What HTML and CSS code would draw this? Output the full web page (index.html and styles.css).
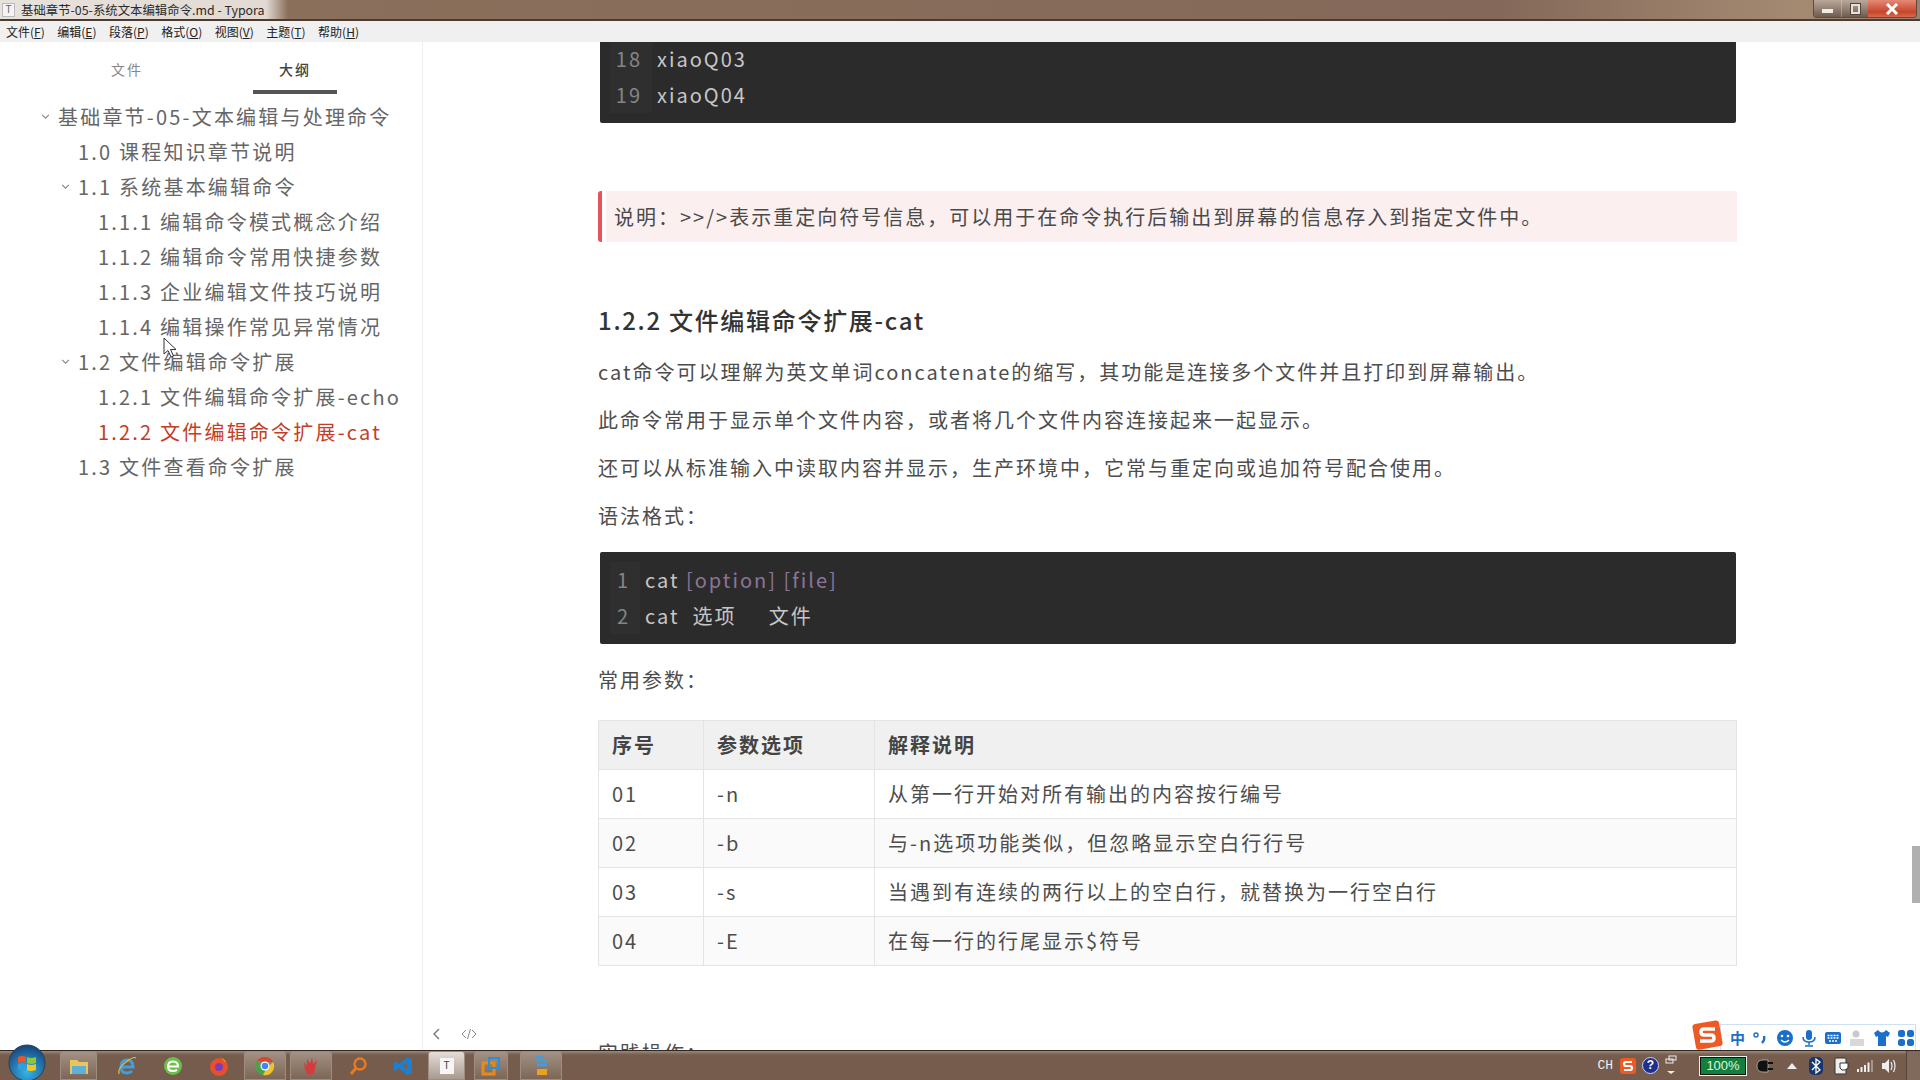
FILE: index.html
```html
<!DOCTYPE html>
<html lang="zh-CN">
<head>
<meta charset="utf-8">
<title>Typora</title>
<link rel="stylesheet" href="styles.css">
</head>
<body>
<div class="app">
  <header class="titlebar">
    <div class="title-left">
      <span class="app-icon">T</span>
      <span class="title-text">基础章节-05-系统文本编辑命令.md - Typora</span>
    </div>
    <div class="winbtns">
      <span class="wb wb-min"><i class="min-glyph"></i></span>
      <span class="wb wb-max"><i class="max-glyph"></i></span>
      <span class="wb wb-close">
        <svg width="14" height="12" viewBox="0 0 14 12"><path d="M2 1l10 10M12 1L2 11" stroke="#fff" stroke-width="3"/></svg>
      </span>
    </div>
  </header>
  <nav class="menubar">
    <span class="mi">文件(<u>F</u>)</span>
    <span class="mi">编辑(<u>E</u>)</span>
    <span class="mi">段落(<u>P</u>)</span>
    <span class="mi">格式(<u>O</u>)</span>
    <span class="mi">视图(<u>V</u>)</span>
    <span class="mi">主题(<u>T</u>)</span>
    <span class="mi">帮助(<u>H</u>)</span>
  </nav>
  <main class="main">
    <aside class="sidebar">
      <div class="tabs">
        <span class="tab">文件</span>
        <span class="tab tab-on">大纲</span>
      </div>
      <ul class="outline">
        <li class="l1"><svg class="chev" viewBox="0 0 8 6"><path d="M1 1.5l3 3 3-3" fill="none" stroke="#888" stroke-width="1"/></svg>基础章节-05-文本编辑与处理命令</li>
        <li class="l2"><span class="nochev"></span>1.0 课程知识章节说明</li>
        <li class="l2"><svg class="chev" viewBox="0 0 8 6"><path d="M1 1.5l3 3 3-3" fill="none" stroke="#888" stroke-width="1"/></svg>1.1 系统基本编辑命令</li>
        <li class="l3"><span class="nochev"></span>1.1.1 编辑命令模式概念介绍</li>
        <li class="l3"><span class="nochev"></span>1.1.2 编辑命令常用快捷参数</li>
        <li class="l3"><span class="nochev"></span>1.1.3 企业编辑文件技巧说明</li>
        <li class="l3"><span class="nochev"></span>1.1.4 编辑操作常见异常情况</li>
        <li class="l2"><svg class="chev" viewBox="0 0 8 6"><path d="M1 1.5l3 3 3-3" fill="none" stroke="#888" stroke-width="1"/></svg>1.2 文件编辑命令扩展</li>
        <li class="l3"><span class="nochev"></span>1.2.1 文件编辑命令扩展-echo</li>
        <li class="l3 active"><span class="nochev"></span>1.2.2 文件编辑命令扩展-cat</li>
        <li class="l2"><span class="nochev"></span>1.3 文件查看命令扩展</li>
      </ul>
    </aside>
    <section class="content">
      <div class="doc">
        <div class="code code-top">
          <div class="line"><span class="ln ln2">18</span><span>xiaoQ03</span></div>
          <div class="line"><span class="ln ln2">19</span><span>xiaoQ04</span></div>
        </div>
        <blockquote class="callout"><p class="callout-text">说明：&gt;&gt;/&gt;表示重定向符号信息，可以用于在命令执行后输出到屏幕的信息存入到指定文件中。</p></blockquote>
        <h3 class="h3">1.2.2 文件编辑命令扩展-cat</h3>
        <p class="para">cat命令可以理解为英文单词concatenate的缩写，其功能是连接多个文件并且打印到屏幕输出。</p>
        <p class="para">此命令常用于显示单个文件内容，或者将几个文件内容连接起来一起显示。</p>
        <p class="para">还可以从标准输入中读取内容并显示，生产环境中，它常与重定向或追加符号配合使用。</p>
        <p class="para">语法格式：</p>
        <div class="code code-mid">
          <div class="line"><span class="ln ln1">1</span><span>cat <span class="purple">[option] [file]</span></span></div>
          <div class="line"><span class="ln ln1">2</span><span class="pre">cat  选项     文件</span></div>
        </div>
        <p class="para para-mid">常用参数：</p>
        <table class="tbl">
          <thead><tr><th class="c1">序号</th><th class="c2">参数选项</th><th>解释说明</th></tr></thead>
          <tbody>
            <tr><td>01</td><td>-n</td><td>从第一行开始对所有输出的内容按行编号</td></tr>
            <tr><td>02</td><td>-b</td><td>与-n选项功能类似，但忽略显示空白行行号</td></tr>
            <tr><td>03</td><td>-s</td><td>当遇到有连续的两行以上的空白行，就替换为一行空白行</td></tr>
            <tr><td>04</td><td>-E</td><td>在每一行的行尾显示$符号</td></tr>
          </tbody>
        </table>
        <p class="para para-last">实践操作：</p>
      </div>
    </section>
    <div class="foot-tools">
      <svg width="10" height="14" viewBox="0 0 10 14"><path d="M8 2L3 7l5 5" fill="none" stroke="#777" stroke-width="1.4"/></svg>
      <svg width="16" height="12" viewBox="0 0 16 12"><path d="M5 2L1 6l4 4M11 2l4 4-4 4M9.5 1L6.5 11" fill="none" stroke="#888" stroke-width="1"/></svg>
    </div>
    <div class="scroll-thumb"></div>
    <svg class="cursor" width="14" height="21" viewBox="0 0 14 21"><path d="M1 1v16l4-3.5 3 6.5 2.5-1-3-6.5h5.5z" fill="#fff" stroke="#333" stroke-width="1"/></svg>
  </main>
  <div class="ime">
    <svg class="ime-logo" width="32" height="30" viewBox="0 0 32 30"><rect x="2" y="2" width="27" height="26" rx="3" fill="#ee5a24" transform="rotate(-10 16 15)"/><path d="M23 9H12q-3 0-3 3t3 3h7q3 0 3 3t-3 3H8" fill="none" stroke="#fff" stroke-width="3.5"/></svg>
    <div class="ime-bar">
      <span class="ime-zh">中</span>
      <svg width="18" height="18" viewBox="0 0 18 18"><circle cx="5" cy="6" r="2" fill="none" stroke="#1a6fc9" stroke-width="1.4"/><path d="M13 7q1 4-2 7" fill="none" stroke="#1a6fc9" stroke-width="2.4"/></svg>
      <svg width="18" height="18" viewBox="0 0 18 18"><circle cx="9" cy="9" r="8" fill="#1a6fc9"/><circle cx="6" cy="7" r="1.3" fill="#fff"/><circle cx="12" cy="7" r="1.3" fill="#fff"/><path d="M5 11q4 4 8 0" fill="none" stroke="#fff" stroke-width="1.4"/></svg>
      <svg width="18" height="18" viewBox="0 0 18 18"><rect x="6" y="1" width="6" height="10" rx="3" fill="#1a6fc9"/><path d="M3 8q0 5 6 5t6-5M9 13v3M5 17h8" fill="none" stroke="#1a6fc9" stroke-width="1.5"/></svg>
      <svg width="18" height="18" viewBox="0 0 18 18"><rect x="1" y="3" width="16" height="12" rx="2" fill="#1a6fc9"/><path d="M3.5 6.5h11M3.5 9h11M5 12h8" stroke="#fff" stroke-width="1.3" stroke-dasharray="2 1"/></svg>
      <svg width="18" height="18" viewBox="0 0 18 18"><circle cx="8" cy="5" r="3.5" fill="#c9c9c9"/><rect x="2" y="10" width="14" height="7" fill="#d8d8d8"/></svg>
      <svg width="18" height="18" viewBox="0 0 18 18"><path d="M5 1L1 4l2 4 2-1v10h8V7l2 1 2-4-4-3q-2 2.500-4 2.500T5 1z" fill="#1a6fc9"/></svg>
      <svg width="18" height="18" viewBox="0 0 18 18"><rect x="1" y="1" width="7" height="7" rx="2.500" fill="#1a6fc9"/><rect x="10" y="1" width="7" height="7" rx="2.500" fill="#1a6fc9"/><rect x="1" y="10" width="7" height="7" rx="2.500" fill="#1a6fc9"/><rect x="10" y="10" width="7" height="7" rx="2.500" fill="#1a6fc9"/></svg>
    </div>
  </div>
  <footer class="taskbar">
    <div class="tb-left">
      <span class="slot s-orb">
        <svg width="38" height="38" viewBox="0 0 38 38"><defs><radialGradient id="orb" cx="50%" cy="75%" r="70%"><stop offset="0" stop-color="#35b6ea"/><stop offset="1" stop-color="#174a80"/></radialGradient></defs><circle cx="19" cy="19" r="18" fill="url(#orb)" stroke="#2c3f52"/><path d="M10 13q4-2 8 0v6q-4-2-8 0z" fill="#e8562a"/><path d="M19 13q4 2 9 0v6q-5 2-9 0z" fill="#8cc63f"/><path d="M10 20q4-2 8 0v6q-4-2-8 0z" fill="#2f9fe0"/><path d="M19 20q4 2 9 0v6q-5 2-9 0z" fill="#f5c518"/></svg>
      </span>
      <span class="slot btn s-exp">
        <svg width="20" height="18" viewBox="0 0 20 18"><path d="M1 3h7l2 2h9v12H1z" fill="#e9c65c"/><rect x="3" y="9" width="14" height="8" fill="#5fb0d8"/></svg>
      </span>
      <span class="slot s-46">
        <svg width="22" height="22" viewBox="0 0 22 22"><path d="M5 12h12q0-7-6-7t-6 7q0 6 6 6 3 0 5-2" fill="none" stroke="#3f9ee0" stroke-width="3"/><path d="M3 19Q1 14 10 7q8-6 10-4" fill="none" stroke="#e3bb3c" stroke-width="1.3"/></svg>
      </span>
      <span class="slot s-46">
        <svg width="20" height="20" viewBox="0 0 20 20"><circle cx="10" cy="10" r="9" fill="#6cc04a"/><path d="M5 10.500h10q0-5-5-5t-5 5q0 4.500 5 4.500 2 0 4-1" fill="none" stroke="#fff" stroke-width="2"/></svg>
      </span>
      <span class="slot s-46">
        <svg width="22" height="22" viewBox="0 0 22 22"><circle cx="11" cy="12" r="9" fill="#e8502c"/><path d="M11 1q6 3 9 9-1-3-4-4-1-3-5-5z" fill="#f8a825"/><circle cx="11" cy="12" r="4" fill="#7b3fb5"/></svg>
      </span>
      <span class="slot btn s-chrome">
        <svg width="20" height="20" viewBox="0 0 20 20"><path d="M10 1a9 9 0 0 1 8 5h-8z" fill="#d9452f"/><path d="M2 5a9 9 0 0 1 8-4v5z" fill="#d9452f"/><path d="M2 5a9 9 0 0 0 6 14l3-6z" fill="#4aa14a"/><path d="M18 6a9 9 0 0 1-10 13l3-6z" fill="#f2c22e"/><circle cx="10" cy="10" r="4.500" fill="#fff"/><circle cx="10" cy="10" r="3.300" fill="#4285f4"/></svg>
      </span>
      <span class="slot btn s-red">
        <svg width="18" height="20" viewBox="0 0 18 20"><path d="M2 6l3 4V2l3 6 2-7 1 7 4-4-2 8q-1 7-5 7-5 0-6-13z" fill="#d63b3b"/></svg>
      </span>
      <span class="slot s-46 s-search">
        <svg width="20" height="20" viewBox="0 0 20 20"><circle cx="12" cy="8" r="5.500" fill="none" stroke="#e8791e" stroke-width="2.500"/><path d="M8 12l-5 6" stroke="#e8791e" stroke-width="3"/></svg>
      </span>
      <span class="slot s-46 s-code">
        <svg width="20" height="20" viewBox="0 0 20 20"><path d="M14 1l5 2v14l-5 2-8-7-4 3-1-1V6l1-1 4 3z" fill="#1d7fd0"/><path d="M14 6l-4 4 4 4z" fill="#7a604f"/></svg>
      </span>
      <span class="slot btn btn-on s-typ"><span class="typ-icon">T</span></span>
      <span class="slot btn s-box">
        <svg width="20" height="20" viewBox="0 0 20 20"><rect x="2" y="7" width="11" height="11" fill="none" stroke="#e58a1f" stroke-width="3"/><rect x="8" y="2" width="10" height="10" fill="none" stroke="#2e8fd0" stroke-width="2"/></svg>
      </span>
      <span class="slot btn s-sub">
        <svg width="20" height="22" viewBox="0 0 20 22"><path d="M4 2h9M4 6h12M6 10h10" stroke="#3f9ee0" stroke-width="2.500"/><path d="M6 14h10v6H6z" fill="#e8a21f"/></svg>
      </span>
    </div>
    <div class="tb-right">
      <span class="tray-ch">CH</span>
      <svg width="18" height="18" viewBox="0 0 18 18"><rect x="1" y="1" width="16" height="16" rx="3" fill="#ee5a24"/><path d="M13 5H7q-2 0-2 2t2 2h4q2 0 2 2t-2 2H5" fill="none" stroke="#fff" stroke-width="2.200"/></svg>
      <span class="tray-help">?</span>
      <svg class="t-win" width="14" height="22" viewBox="0 0 14 22"><rect x="2" y="4" width="7" height="4" fill="none" stroke="#eee"/><rect x="5" y="1" width="7" height="4" fill="none" stroke="#eee"/><path d="M3 16h8l-4 3z" fill="#eee"/></svg>
      <span class="battery"><span class="battery-fill">100%</span></span>
      <svg class="t-plug" width="18" height="14" viewBox="0 0 18 14"><path d="M7 1h5v12H7Q1 13 1 7t6-6z" fill="#111" stroke="#ddd" stroke-width=".6"/><path d="M12 4h5M12 10h5" stroke="#111" stroke-width="2"/></svg>
      <svg class="t-arrow" width="10" height="6" viewBox="0 0 10 6"><path d="M5 0l5 6H0z" fill="#eee"/></svg>
      <svg class="t-bt" width="14" height="18" viewBox="0 0 14 18"><rect width="14" height="18" rx="5" fill="#17356e"/><path d="M3 5l8 8-4 3V2l4 3-8 8" fill="none" stroke="#fff" stroke-width="1.300"/></svg>
      <svg class="t-usb" width="16" height="20" viewBox="0 0 16 20"><rect x="1" y="2" width="11" height="16" rx="1" fill="#eee" stroke="#333"/><path d="M6 7h8v5l-3 2H8l-2-2z" fill="#fff" stroke="#333"/></svg>
      <svg class="t-sig" width="16" height="12" viewBox="0 0 16 12"><rect x="0" y="9" width="2" height="3" fill="#eee"/><rect x="3.500" y="7" width="2" height="5" fill="#eee"/><rect x="7" y="5" width="2" height="7" fill="#eee"/><rect x="10.500" y="2.500" width="2" height="9.500" fill="#eee"/><rect x="14" y="0" width="2" height="12" fill="#a89688"/></svg>
      <svg class="t-vol" width="16" height="16" viewBox="0 0 16 16"><path d="M1 5h3l4-4v14l-4-4H1z" fill="#eee"/><path d="M10 4q2 4 0 8M12.500 2q3 6 0 12" fill="none" stroke="#eee" stroke-width="1.200"/></svg>
      <span class="show-desk"></span>
    </div>
  </footer>
</div>
</body>
</html>
```
FILE: styles.css
```css
* { box-sizing: border-box; }
html, body { margin: 0; padding: 0; height: 100%; overflow: hidden; }
body { font-family: "Noto Sans CJK SC", "Noto Sans", sans-serif; background: #fff; color: #4d4d4d; }
.app { position: relative; width: 1920px; height: 1080px; display: flex; flex-direction: column; overflow: hidden; }

/* title bar */
.titlebar { height: 21px; flex: none; display: flex; justify-content: space-between;
  background: linear-gradient(90deg, #e8e2dc 0, #e2dad3 266px, #8a6f5b 288px, #84695a 1500px, #a58a72 1800px, #9b8270 100%);
  border-bottom: 2px solid #4b3b32; }
.title-left { display: flex; align-items: center; height: 20px; }
.app-icon { width: 13px; height: 14px; margin-left: 2px; background: #f4f4f4; border: 1px solid #bbb; color: #666; font: 10px/12px "Liberation Sans", sans-serif; text-align: center; }
.title-text { margin-left: 6px; font-size: 12.4px; line-height: 20px; color: #2a2a2a; }
.winbtns { display: flex; height: 18px; margin-right: 3px; border: 1px solid #5a4a40; border-top: 0; border-radius: 0 0 4px 4px; overflow: hidden; }
.wb { display: flex; align-items: center; justify-content: center; height: 100%; }
.wb-min { width: 28px; background: linear-gradient(#b9a99b, #6d5b4f); border-right: 1px solid #eee5; }
.wb-max { width: 26px; background: linear-gradient(#b9a99b, #6d5b4f); }
.wb-close { width: 48px; background: linear-gradient(#e58a77, #c8452a 70%, #d76a50); }
.min-glyph { width: 11px; height: 4px; margin-top: 4px; background: #f2ebe4; }
.max-glyph { width: 9px; height: 10px; border: 2px solid #e8e0d8; outline: 1px solid #55463c; }

/* menu */
.menubar { height: 21px; flex: none; display: flex; align-items: center; gap: 12.5px; padding-left: 6px; background: #f0f0f0; font-size: 12px; color: #222; }
.mi { line-height: 21px; white-space: nowrap; }

/* main */
.main { position: relative; flex: 1; min-height: 0; display: flex; }
.sidebar { width: 423px; flex: none; border-right: 1px solid #eee; }
.tabs { display: flex; padding: 0 0 0 43px; height: 52px; }
.tab { width: 168px; height: 52px; padding-top: 16px; text-align: center; font-size: 14px; line-height: 22px; letter-spacing: 2px; color: #888; }
.tab-on { color: #444; font-weight: 500; position: relative; }
.tab-on::after { content: ""; position: absolute; left: 42px; right: 42px; top: 48px; height: 4px; background: #555; }
.outline { list-style: none; margin: 5px 0 0; padding: 0; font-size: 20px; letter-spacing: 2.2px; color: #666; }
.outline li { display: flex; align-items: center; height: 35px; white-space: pre; }
.l1 { padding-left: 41px; }
.l2 { padding-left: 61px; }
.l3 { padding-left: 81px; }
.chev { width: 9px; height: 7px; margin-right: 8px; flex: none; }
.nochev { width: 17px; flex: none; }
.outline .active { color: #c43d27; }

/* document */
.content { flex: 1; min-width: 0; overflow: hidden; }
.doc { width: 1139px; margin-left: 175px; font-size: 20px; letter-spacing: 2px; color: #4d4d4d; }
.code { margin: 0 1px 0 2px; background: #2b2b2b; color: #c6c6c6; border-radius: 2px; }
.code-top { margin-top: -1px; padding-bottom: 10px; }
.code-mid { margin-top: 20px; padding: 10px 0; }
.line { display: flex; height: 36px; line-height: 36px; }
.ln { flex: none; text-align: right; background: #2f2f2f; color: #858585; }
.ln2 { width: 42px; margin-left: 10px; padding-right: 10px; margin-right: 5px; }
.ln1 { width: 30px; margin-left: 10px; padding-right: 10px; margin-right: 5px; }
.pre { white-space: pre; }
.purple { color: #8b7596; }
.callout { margin: 68px 0 0; border-left: 4px solid #e8525c; border-radius: 3px; height: 51px; }
.callout-text { margin: 0 0 0 4px; height: 51px; padding-left: 8px; background: #fbf0ef; line-height: 51px; color: #4a4a4a; }
.h3 { margin: 60px 0 0; font-size: 24px; line-height: 36px; font-weight: 500; letter-spacing: 1.700px; color: #333; }
.para { margin: 16px 0 0; line-height: 32px; }
.h3 + .para { margin-top: 18px; }
.para-mid { margin-top: 20px; }
.para-last { margin-top: 71px; }
.tbl { width: 100%; margin-top: 24px; border-collapse: collapse; table-layout: fixed; }
.c1 { width: 105px; }
.c2 { width: 171px; }
.tbl th, .tbl td { height: 49px; padding: 0 0 0 13px; border: 1px solid #e4e4e4; text-align: left; line-height: 32px; font-size: 20px; }
.tbl th { background: #f0f0f0; font-weight: 600; color: #444; }
.tbl tbody tr:nth-child(even) td { background: #fafafa; }

.foot-tools { position: absolute; left: 431px; top: 985px; display: flex; align-items: center; gap: 20px; }
.scroll-thumb { position: absolute; right: 0; top: 804px; width: 8px; height: 57px; background: #b0b0b0; }
.cursor { position: absolute; left: 163px; top: 295px; }

/* IME */
.ime { position: absolute; left: 1692px; top: 1020px; height: 30px; display: flex; align-items: flex-end; z-index: 3; }
.ime-logo { position: relative; z-index: 1; }
.ime-bar { width: 196px; height: 26px; margin-left: -4px; padding: 0 0 0 9px; display: flex; align-items: center; justify-content: space-between; background: #fff; border: 1px solid #cfe0f2; border-bottom: 0; }
.ime-zh { font-size: 15px; font-weight: 700; color: #1a6fc9; line-height: 18px; }

/* taskbar */
.taskbar { height: 30px; flex: none; display: flex; justify-content: space-between; background: #755c4c; border-top: 1px solid #33261f; position: relative; box-shadow: inset 0 4px 3px -2px #9a8a7e; }
.tb-left { display: flex; height: 29px; }
.slot { display: flex; align-items: center; justify-content: center; height: 29px; flex: none; }
.btn { background: linear-gradient(#a39184, #7d6656); border: 1px solid #9d8c80; border-radius: 3px 3px 0 0; }
.btn-on { background: linear-gradient(#e4ddd8, #a89a8f); }
.s-orb { width: 60px; justify-content: flex-start; padding-left: 8px; overflow: visible; margin-top: -6px; height: 35px; }
.s-exp { width: 37px; }
.s-46 { width: 46px; }
.s-46:nth-child(3) { margin-left: 7px; }
.s-chrome { width: 42px; margin-left: 2px; }
.s-red { width: 42px; margin-left: 4px; }
.s-search { margin-left: 3px; }
.s-code { margin-left: -1px; }
.s-typ { width: 37px; margin-left: 2px; }
.s-box { width: 34px; margin-left: 9px; }
.s-sub { width: 42px; margin-left: 12px; }
.typ-icon { width: 14px; height: 16px; background: #f6f6f6; color: #444; font: 10px/16px "Liberation Sans", sans-serif; text-align: center; }
.tb-right { display: flex; align-items: center; gap: 0; height: 29px; }
.tb-right > svg { margin-left: 10px; }
.tb-right > .t-win { margin-left: 5px; }
.tb-right > .t-plug { margin-left: 9px; }
.tb-right > .t-arrow { margin-left: 13px; }
.tb-right > .t-bt { margin-left: 12px; }
.tb-right > .t-usb { margin-left: 11px; }
.tb-right > .t-sig { margin-left: 7px; }
.tb-right > .t-vol { margin-left: 8px; }
.tray-ch { font: 13px/16px "Liberation Mono", monospace; color: #f0f0f0; margin-right: -4px; }
.tray-help { width: 17px; height: 17px; margin-left: 5px; border-radius: 50%; background: #1f2f8f; border: 1px solid #cfd4ea; color: #fff; font: 700 12px/15px "Liberation Sans", sans-serif; text-align: center; }
.battery { width: 48px; height: 20px; margin-left: 21px; padding: 1px; background: #111; border: 1px solid #eee; display: block; }
.battery-fill { display: block; width: 100%; height: 100%; background: #12803c; color: #dff5e3; font: 13px/16px "Liberation Sans", sans-serif; text-align: center; }
.show-desk { width: 14px; height: 29px; margin-left: 9px; background: #7f6a5b; border-left: 1px solid #55443a; }
```
